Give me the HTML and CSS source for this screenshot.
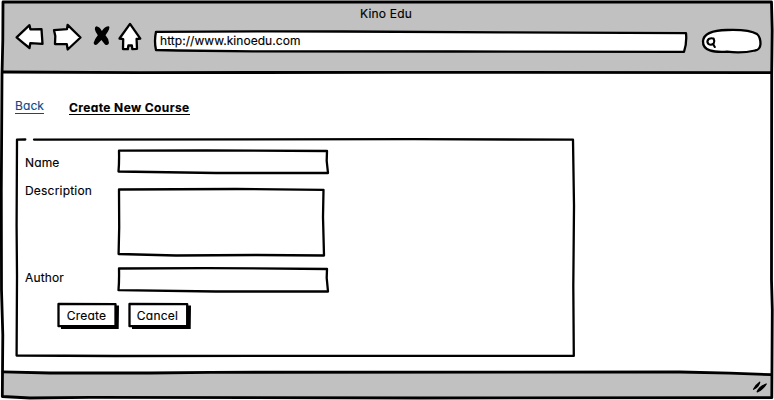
FILE: index.html
```html
<!DOCTYPE html>
<html lang="en">
<head>
<meta charset="utf-8">
<title>Kino Edu</title>
<link rel="stylesheet" href="styles.css">
</head>
<body>
<div class="window">
  <svg class="window-frame sketch" viewBox="0 0 774 400">
    <path class="paper" d="M2.5 2 L771.5 2 L771.5 398 L2.5 397 Z"/>
    <path class="chrome" d="M3 2 H771 L771.500 72.500 H3 Z"/>
    <path class="chrome" d="M3 372.500 L120 372.800 L220 372 L680 372 L771 374.500 L771.500 397.500 L3 397 Z"/>
    <path class="thick" d="M3 2 L771.500 2 L772.200 30 L771.700 72 L771.500 280 L772.300 310 L771.800 397.700 L420 398 L90 397.300 L30 398 L2.300 396.500 L2.800 335 L1.500 290 L1.300 190 L2 75 L2.800 40 Z"/>
    <path class="thick" d="M3 72 L140 72.700 L400 72.300 L771 72.700"/>
    <path class="thick" d="M3 371.800 L50 373 L150 373 L210 372.300 L680 372 L730 373.200 L771 374.600"/>
  </svg>
  <header class="header">
    <div class="title">Kino Edu</div>
    <div class="toolbar">
      <svg class="icon back sketch" viewBox="14 20 32 32"><path class="mid" d="M16.600 37.300 L29.500 25.200 L30.400 29.300 L41.500 29.100 L42.500 43.800 L30.300 43.200 L29.500 48 Q22 42 16.600 37.300Z"/></svg>
      <svg class="icon forward sketch" viewBox="51 20 32 32"><path class="mid" d="M54 30.200 L67 29.200 L67.600 24.900 L80.500 37.500 L67.700 49.500 L66.800 44.200 L55 44 L55.300 36 Z"/></svg>
      <svg class="icon stop" viewBox="92 20 20 32"><path d="M96.200 26.200 Q99.500 26.500 101.900 31 Q104.500 26.200 109 26.200 Q110.700 28 105.500 35.300 Q109 39 109 43 Q108 46 105 44.500 L101.400 40 L97 44.600 Q94.200 45.600 93.600 43 Q95 38.600 97.800 35.300 Q92.800 28 96.200 26.200Z"/></svg>
      <svg class="icon home sketch" viewBox="117 20 26 32"><path class="mid" d="M130 23.900 L140.300 38.600 L136.600 39 L137 48.900 L132.300 49.200 L131.900 45.500 L128.400 45.500 L127.800 49.200 L123 49 L123.200 39.200 L119.500 38.500 Z"/></svg>
      <div class="address">
        <svg class="frame sketch" viewBox="0 0 536 24"><path class="mid" d="M3 1.800 Q100 1 190 1.500 L350 2.400 L533 3.200 Q534 13 531 21.800 L300 21.500 L100 21.300 L25 20.500 L3 20 Q1 11 3 1.800Z"/></svg>
        <span class="url">http://www.kinoedu.com</span>
      </div>
      <svg class="icon search sketch" viewBox="700 28 64 28"><path class="mid" d="M703 41 Q704 30.500 727 30 Q749 29.200 757 34 Q760.500 37 760.500 44 Q760 50 755 50.500 Q742 53.500 727 51.700 C714 52.500 702.500 51 703 41Z"/><path class="glass" d="M713.700 38.700 Q711.500 37.600 708.700 39 Q706.300 41.500 708.300 43.900 Q711 45.600 713.600 43.700 Q715 41 713.700 38.700 M713 44 L714.800 47"/></svg>
    </div>
  </header>
  <main class="content">
    <nav class="links"><a class="back-link">Back</a><span class="current">Create New Course</span></nav>
    <form class="group">
      <svg class="frame sketch" viewBox="0 0 562 222"><path class="line" d="M11.300 3.500 L3 3.600 L2.600 90 L3 140 L2.600 219.500 L100 220 L559.800 219.900 L559.300 150 L560 70 L559 3.700 L400 3.200 L20 3.600"/></svg>
      <div class="row name"><label>Name</label><div class="field single"><svg class="frame sketch" viewBox="0 0 214 27"><path class="line white" d="M3 2.700 L90 2.500 L211 3 L210.700 13 L212 25 L100 25 L2.500 23.500 Q3.300 15 3 2.700Z"/></svg></div></div>
      <div class="row description"><label>Description</label><div class="field multi"><svg class="frame sketch" viewBox="0 0 214 70"><path class="line white" d="M3 2.500 L120 2 L207.500 2.800 L207 30 L208 68.500 L140 68 L60 68.500 L2.600 67 L3.200 40Z"/></svg></div></div>
      <div class="row author"><label>Author</label><div class="field single"><svg class="frame sketch" viewBox="0 0 214 27"><path class="line white" d="M3 3.500 L90 3.100 L211 4 L210.700 13 L212 26.500 L100 26.500 L2.500 25.200 Q3.300 15 3 3.500Z"/></svg></div></div>
      <div class="actions">
        <div class="button"><svg class="frame" viewBox="0 0 64 28"><path d="M4 24 H59 V3.500 H62 L61.700 27 L4 27Z"/><path class="line white" d="M1.500 2 L58.500 2.200 L58.500 23.800 L1.500 24.200Z"/></svg><span>Create</span></div>
        <div class="button"><svg class="frame" viewBox="0 0 64 28"><path d="M4 24 H59 V3.500 H63 L62.700 27 L4 27Z"/><path class="line white" d="M1.500 2 L59.200 2.200 L59.200 23.800 L1.500 24.200Z"/></svg><span>Cancel</span></div>
      </div>
    </form>
  </main>
  <footer class="footer">
    <svg class="grip sketch" viewBox="0 0 18 16"><path class="mark" d="M2.600 10.200 Q4 6.500 8.700 3.200 Q8 7.500 2.600 10.200Z M6.200 12.800 Q8 8 15.200 5 Q12 10.500 6.200 12.800Z"/></svg>
  </footer>
</div>
</body>
</html>
```
FILE: styles.css
```css
* { box-sizing: border-box; }
body { margin: 0; background: #fff; color: #000; font: 12px/16px Inter, "Open Sans", sans-serif; font-feature-settings: "cv11"; -webkit-text-stroke: .15px; }
svg { display: block; overflow: visible; }
.window { display: grid; width: 774px; height: 400px; grid-template: 74px 1fr 28px / 100%; overflow: hidden; }
.window-frame { grid-area: 1 / 1 / -1 / -1; width: 774px; height: 400px; }
.header { grid-area: 1 / 1; }
.content { grid-area: 2 / 1; padding: 23px 15px 0; }
.footer { grid-area: 3 / 1; display: flex; justify-content: flex-end; padding: 7px 5px 0 0; }

.sketch path { stroke: #000; stroke-linejoin: round; stroke-linecap: round; fill: none; }
.sketch .paper { fill: #fff; stroke: none; }
.sketch .chrome { fill: #c1c1c1; stroke: none; }
.sketch .thick { stroke-width: 2.800px; }
.sketch .mid { fill: #fff; stroke-width: 2.300px; }
.sketch .glass { stroke-width: 2.100px; }
.sketch .mark { fill: #000; stroke-width: 1.300px; }
.line { stroke: #000; stroke-width: 2.300px; stroke-linejoin: round; }
.white, .sketch .white { fill: #fff; }

.title { height: 20px; padding: 5px 2px 0 0; text-align: center; line-height: 17px; letter-spacing: .2px; }
.toolbar { display: flex; padding-left: 14px; }
.icon { height: 32px; flex: none; }
.back { width: 32px; margin-right: 5px; }
.forward { width: 32px; margin-right: 9px; }
.stop { width: 20px; margin-right: 5px; }
.home { width: 26px; margin-right: 10px; }
.address { display: grid; width: 536px; height: 24px; margin: 10px 11px 0 0; }
.frame { grid-area: 1 / 1; width: 100%; height: 100%; }
.url { grid-area: 1 / 1; padding: 3px 0 0 7px; line-height: 15px; letter-spacing: .05px; }
.search { width: 64px; height: 28px; margin-top: 8px; }

.links { display: flex; height: 41px; }
.back-link, .current { height: 17px; line-height: 17px; border-bottom: 1px solid; }
.back-link { width: 29px; margin-right: 25px; color: #0b4a8c; letter-spacing: .1px; }
.current { width: 121px; margin-top: 1px; padding-top: 1px; font-weight: 700; letter-spacing: .38px; white-space: nowrap; }
.group { display: grid; width: 562px; height: 222px; margin: -2px 0 0 -1px; grid-template: 12px 39px 78px 37px 1fr / 11px 1fr; }
.group > .frame { grid-area: 1 / 1 / -1 / -1; }
.row { grid-column: 2; display: flex; }
.name { grid-row: 2; }
.description { grid-row: 3; }
.author { grid-row: 4; }
label { width: 91px; padding-top: 7px; letter-spacing: .15px; }
.description label { padding-top: 0; margin-top: -4px; letter-spacing: .2px; }
.author label { padding-top: 5px; }
.field { display: grid; width: 214px; }
.single { height: 27px; }
.multi { height: 70px; }
.actions { grid-area: 5 / 2; display: flex; gap: 7px; padding-left: 32px; }
.button { display: grid; width: 64px; height: 28px; text-align: center; }
.button span { grid-area: 1 / 1; padding: 6px 5px 0 0; letter-spacing: .25px; }
.grip { width: 18px; height: 16px; }
```
